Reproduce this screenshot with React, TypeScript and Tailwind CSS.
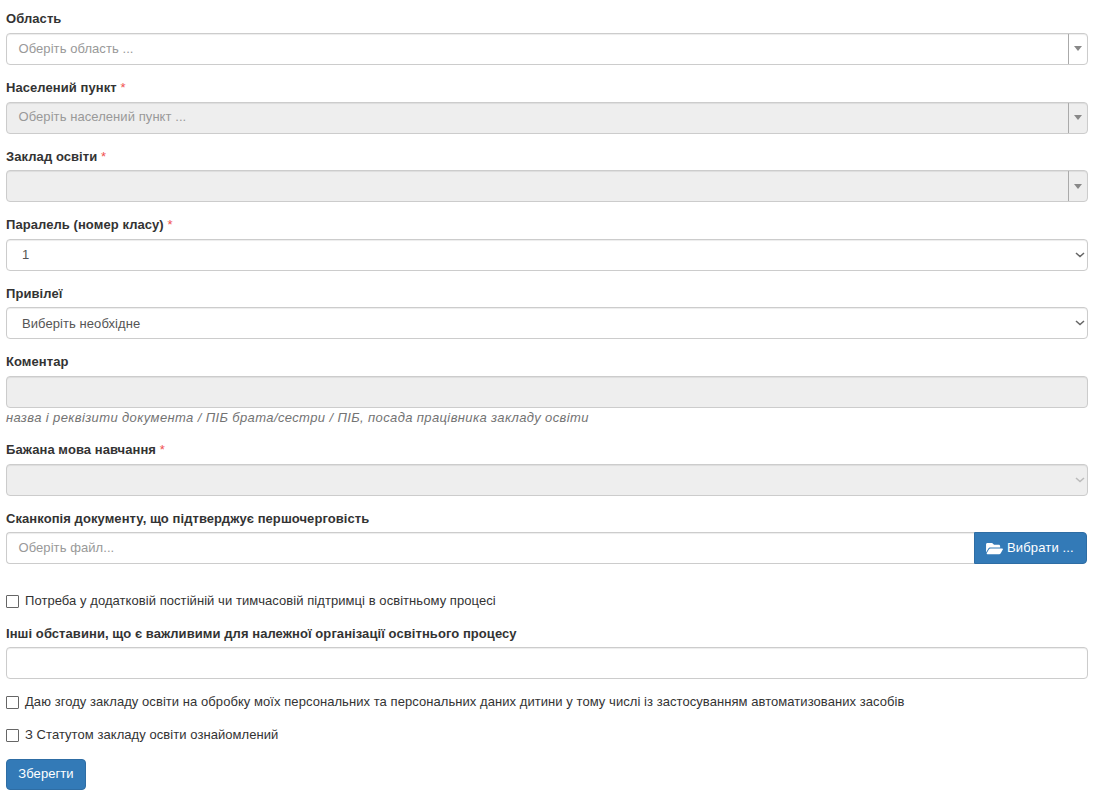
import React from 'react';
import { FaFolderOpen } from 'react-icons/fa';

const Req = () => <span className="text-[#f05050] font-normal"> *</span>;

const Label = ({ children }: { children: React.ReactNode }) => (
  <label className="block h-[20.5px] mb-[4px] text-[13px] leading-[21px] font-bold tracking-[0.07px] text-[#333]">
    {children}
  </label>
);

const Select2 = ({ placeholder, disabled }: { placeholder?: string; disabled?: boolean }) => (
  <div
    className={`flex h-[32px] border border-[#ccc] rounded-[4px] shadow-[inset_0_1px_1px_rgba(0,0,0,0.075)] ${
      disabled ? 'bg-[#eee]' : 'bg-white'
    }`}
  >
    <div
      className={`flex-1 pl-[11.5px] text-[13px] tracking-[0.07px] text-[#999] ${
        disabled ? 'leading-[27px]' : 'leading-[29px]'
      }`}
    >
      {placeholder}
    </div>
    <div className="w-[19px] flex items-center justify-center border-l border-[#aaa]">
      <span className="w-0 h-0 border-x-[4px] border-x-transparent border-t-[5px] border-t-[#888]" />
    </div>
  </div>
);

const NativeSelect = ({ value, disabled, className = '' }: { value: string; disabled?: boolean; className?: string }) => (
  <div className="relative">
    <select
      disabled={disabled}
      defaultValue={value}
      className={`block appearance-none w-full h-[32px] pl-[15px] pr-6 border border-[#ccc] rounded-[4px] text-[13px] tracking-[0.07px] text-[#555] shadow-[inset_0_1px_1px_rgba(0,0,0,0.075)] ${
        disabled ? 'bg-[#eee]' : 'bg-white'
      } ${className}`}
    >
      <option value={value}>{value}</option>
    </select>
    <svg
      viewBox="0 0 10 6"
      className={`absolute right-[3px] top-[13px] w-[10px] h-[6px] fill-none stroke-[1.5] ${
        disabled ? 'stroke-[#bbb]' : 'stroke-[#666]'
      }`}
    >
      <path d="M1 1l4 3.6L9 1" />
    </svg>
  </div>
);

const Check = ({ children, className }: { children: React.ReactNode; className: string }) => (
  <label className={`flex items-center gap-[6px] h-[20px] text-[13px] leading-[20px] tracking-[0.06px] text-[#333] ${className}`}>
    <input
      type="checkbox"
      className="appearance-none w-[13px] h-[13px] m-0 shrink-0 translate-y-[1px] bg-white border border-[#666] rounded-[1px]"
    />
    <span>{children}</span>
  </label>
);

const App = () => {
  return (
    <div className="w-[1096px] h-[797px] bg-white overflow-hidden pl-[6px] pr-[8px] pt-[8px] font-['Liberation_Sans',Arial,sans-serif]">
      <div className="mb-[12.5px]">
        <Label>Область</Label>
        <Select2 placeholder="Оберіть область ..." />
      </div>
      <div className="mb-[12px]">
        <Label>Населений пункт <Req /></Label>
        <Select2 placeholder="Оберіть населений пункт ..." disabled />
      </div>
      <div className="mb-[12px]">
        <Label>Заклад освіти <Req /></Label>
        <Select2 disabled />
      </div>
      <div className="mb-[12px]">
        <Label>Паралель (номер класу) <Req /></Label>
        <NativeSelect value="1" />
      </div>
      <div className="mb-[12px]">
        <Label>Привілеї</Label>
        <NativeSelect value="Виберіть необхідне" className="pt-[2px]" />
      </div>
      <div className="mb-[11.5px]">
        <Label>Коментар</Label>
        <div className="h-[32px] bg-[#eee] border border-[#ccc] rounded-[4px] shadow-[inset_0_1px_1px_rgba(0,0,0,0.075)]" />
        <p className="h-[20px] text-[13px] leading-[20px] italic tracking-[0.38px] text-[#737373]">
          назва і реквізити документа / ПІБ брата/сестри / ПІБ, посада працівника закладу освіти
        </p>
      </div>
      <div className="mb-[12px]">
        <Label>Бажана мова навчання <Req /></Label>
        <NativeSelect value="" disabled />
      </div>
      <div>
        <Label>Сканкопія документу, що підтверджує першочерговість</Label>
        <div className="flex h-[32px] mr-[1px]">
          <div className="flex-1 pl-[11.5px] border border-[#ccc] border-r-0 rounded-l-[4px] text-[13px] leading-[29px] tracking-[0.07px] text-[#999] shadow-[inset_0_1px_1px_rgba(0,0,0,0.075)]">
            Оберіть файл...
          </div>
          <button className="w-[113px] flex items-center justify-start pl-[11px] gap-[4px] bg-[#337ab7] border border-[#2e6da4] rounded-r-[4px] text-white text-[13px] tracking-[0.15px]">
            <FaFolderOpen className="w-[17px] h-[15px]" />
            Вибрати ...
          </button>
        </div>
      </div>
      <Check className="mt-[26.5px]">Потреба у додатковій постійній чи тимчасовій підтримці в освітньому процесі</Check>
      <div className="mt-[12px]">
        <Label>Інші обставини, що є важливими для належної організації освітнього процесу</Label>
        <div className="h-[32px] bg-white border border-[#ccc] rounded-[4px] shadow-[inset_0_1px_1px_rgba(0,0,0,0.075)]" />
      </div>
      <Check className="mt-[12.5px]">
        Даю згоду закладу освіти на обробку моїх персональних та персональних даних дитини у тому числі із застосуванням автоматизованих засобів
      </Check>
      <Check className="mt-[13px]">З Статутом закладу освіти ознайомлений</Check>
      <button className="mt-[14px] block w-[80px] h-[31px] bg-[#337ab7] border border-[#2e6da4] rounded-[4px] text-white text-[13px] tracking-[0.07px]">
        Зберегти
      </button>
    </div>
  );
};

export default App;
